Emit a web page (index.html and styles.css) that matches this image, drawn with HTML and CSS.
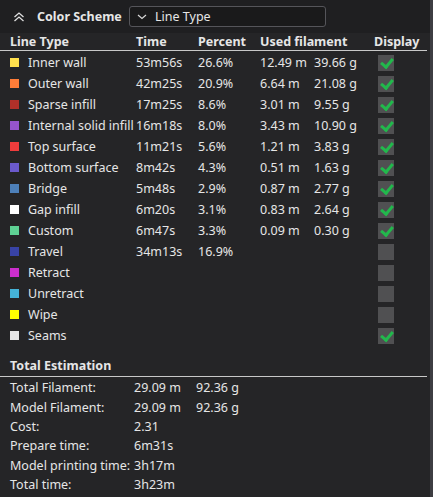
FILE: index.html
```html
<!DOCTYPE html>
<html lang="en">
<head>
    <meta charset="UTF-8">
    <title>Legend</title>
    <link rel="stylesheet" href="styles.css">
</head>
<body>
    <div class="panel">
        <div class="scheme-bar">
            <svg class="collapse" width="12" height="10" viewBox="0 0 12 10">
                <path d="M1.5 5 L6 1 L10.5 5 M1.5 9 L6 5 L10.5 9" fill="none" stroke="#e0e0e0" stroke-width="1.3"/>
            </svg>
            <span class="scheme-title">Color Scheme</span>
            <div class="combo">
                <svg width="10" height="6" viewBox="0 0 10 6">
                    <path d="M1 1 L5 4.5 L9 1" fill="none" stroke="#d8d8d8" stroke-width="1.2"/>
                </svg>
                <span>Line Type</span>
            </div>
        </div>

        <div class="legend">
            <div class="row head">
                <span>Line Type</span>
                <span>Time</span>
                <span>Percent</span>
                <span class="span2">Used filament</span>
                <span>Display</span>
            </div>
            <div class="rule"></div>

            <div class="row"><span class="name"><i style="background:#ffe04d"></i>Inner wall</span><span>53m56s</span><span>26.6%</span><span>12.49 m</span><span>39.66 g</span><span class="check on"></span></div>
            <div class="row"><span class="name"><i style="background:#ff7d38"></i>Outer wall</span><span>42m25s</span><span>20.9%</span><span>6.64 m</span><span>21.08 g</span><span class="check on"></span></div>
            <div class="row"><span class="name"><i style="background:#b03029"></i>Sparse infill</span><span>17m25s</span><span>8.6%</span><span>3.01 m</span><span>9.55 g</span><span class="check on"></span></div>
            <div class="row"><span class="name"><i style="background:#9654cc"></i>Internal solid infill</span><span>16m18s</span><span>8.0%</span><span>3.43 m</span><span>10.90 g</span><span class="check on"></span></div>
            <div class="row"><span class="name"><i style="background:#f03c3c"></i>Top surface</span><span>11m21s</span><span>5.6%</span><span>1.21 m</span><span>3.83 g</span><span class="check on"></span></div>
            <div class="row"><span class="name"><i style="background:#6b5acd"></i>Bottom surface</span><span>8m42s</span><span>4.3%</span><span>0.51 m</span><span>1.63 g</span><span class="check on"></span></div>
            <div class="row"><span class="name"><i style="background:#4d80ba"></i>Bridge</span><span>5m48s</span><span>2.9%</span><span>0.87 m</span><span>2.77 g</span><span class="check on"></span></div>
            <div class="row"><span class="name"><i style="background:#ffffff"></i>Gap infill</span><span>6m20s</span><span>3.1%</span><span>0.83 m</span><span>2.64 g</span><span class="check on"></span></div>
            <div class="row"><span class="name"><i style="background:#5ed194"></i>Custom</span><span>6m47s</span><span>3.3%</span><span>0.09 m</span><span>0.30 g</span><span class="check on"></span></div>
            <div class="row"><span class="name"><i style="background:#3843a6"></i>Travel</span><span>34m13s</span><span>16.9%</span><span></span><span></span><span class="check"></span></div>
            <div class="row"><span class="name"><i style="background:#cc2ecc"></i>Retract</span><span></span><span></span><span></span><span></span><span class="check"></span></div>
            <div class="row"><span class="name"><i style="background:#45b3d8"></i>Unretract</span><span></span><span></span><span></span><span></span><span class="check"></span></div>
            <div class="row"><span class="name"><i style="background:#ffff00"></i>Wipe</span><span></span><span></span><span></span><span></span><span class="check"></span></div>
            <div class="row"><span class="name"><i style="background:#e6e6e6"></i>Seams</span><span></span><span></span><span></span><span></span><span class="check on"></span></div>
        </div>

        <div class="estimation">
            <div class="est-title">Total Estimation</div>
            <div class="rule"></div>
            <div class="est-row"><span>Total Filament:</span><span>29.09 m</span><span>92.36 g</span></div>
            <div class="est-row"><span>Model Filament:</span><span>29.09 m</span><span>92.36 g</span></div>
            <div class="est-row"><span>Cost:</span><span>2.31</span><span></span></div>
            <div class="est-row"><span>Prepare time:</span><span>6m31s</span><span></span></div>
            <div class="est-row"><span>Model printing time:</span><span>3h17m</span><span></span></div>
            <div class="est-row"><span>Total time:</span><span>3h23m</span><span></span></div>
        </div>
    </div>
</body>
</html>
```

FILE: styles.css
```css
body {
    margin: 0;
    background-color: #252527;
    font-family: "Noto Sans", sans-serif;
    font-size: 12.5px;
    color: #e6e6e6;
}
.panel {
    width: 430px;
    height: 497px;
    border-right: 3px solid #3d3d42;
    background-color: #252527;
    overflow: hidden;
}
.scheme-bar {
    height: 33px;
    display: flex;
    align-items: center;
    background-color: #1f1f21;
}
.collapse {
    margin-left: 13px;
    margin-right: 12px;
}
.scheme-title {
    font-weight: bold;
    width: 92px;
}
.combo {
    width: 188px;
    height: 19px;
    border: 1px solid #55555a;
    border-radius: 3px;
    background-color: #1a1a1b;
    display: flex;
    align-items: center;
    gap: 8px;
    padding-left: 7px;
}
.row {
    display: grid;
    grid-template-columns: 126px 62px 62px 54px 60px 20px;
    padding-left: 10px;
    height: 21px;
    align-items: center;
    white-space: nowrap;
}
.row.head {
    height: 17px;
    font-weight: bold;
}
.row.head .span2 {
    grid-column: span 2;
}
.rule {
    height: 1px;
    background-color: #c8c8c8;
    margin: 0 3px 1px 0;
}
.name {
    display: flex;
    align-items: center;
}
.name i {
    width: 9px;
    height: 9px;
    margin-right: 9px;
}
.check {
    width: 16px;
    height: 16px;
    margin-left: 4px;
    background-color: #505052;
    position: relative;
}
.check.on::after {
    content: "";
    position: absolute;
    left: 5px;
    top: 1px;
    width: 5px;
    height: 9px;
    border-right: 3px solid #22b84c;
    border-bottom: 3px solid #22b84c;
    transform: rotate(40deg);
}
.estimation {
    margin-top: 9px;
}
.est-title {
    font-weight: bold;
    padding-left: 10px;
    height: 21px;
    line-height: 21px;
}
.est-row {
    display: grid;
    grid-template-columns: 124px 62px 80px;
    padding-left: 10px;
    height: 19.4px;
    align-items: center;
    white-space: nowrap;
}
```
